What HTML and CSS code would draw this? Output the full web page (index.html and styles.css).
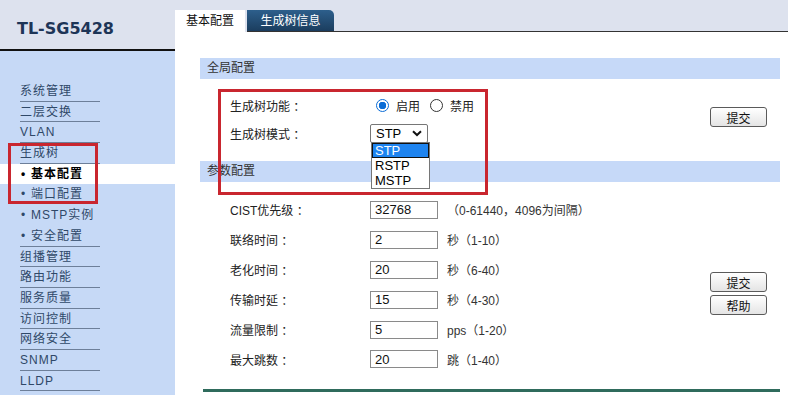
FILE: index.html
```html
<!DOCTYPE html>
<html lang="zh-CN">
<head>
  <meta charset="UTF-8">
  <title>TL-SG5428 生成树</title>
  <link rel="stylesheet" href="styles.css">
</head>
<body>
  <div class="page">

    <!-- 左侧菜单 -->
    <div class="sidebar">
      <div class="logo">TL-SG5428</div>
      <ul class="menu">
        <li><a>系统管理</a></li>
        <li><a>二层交换</a></li>
        <li><a>VLAN</a></li>
        <li><a>生成树</a></li>
        <li class="sub current"><a><span class="dot">•</span>基本配置</a></li>
        <li class="sub"><a><span class="dot">•</span>端口配置</a></li>
        <li class="sub"><a><span class="dot">•</span>MSTP实例</a></li>
        <li class="sub last"><a><span class="dot">•</span>安全配置</a></li>
        <li><a>组播管理</a></li>
        <li><a>路由功能</a></li>
        <li><a>服务质量</a></li>
        <li><a>访问控制</a></li>
        <li><a>网络安全</a></li>
        <li><a>SNMP</a></li>
        <li><a>LLDP</a></li>
      </ul>
      <div class="mark mark-menu"></div>
    </div>

    <!-- 右侧内容 -->
    <div class="main">
      <div class="tabbar">
        <div class="tab active">基本配置</div>
        <div class="tab dark">生成树信息</div>
        <div class="tab-fill"></div>
      </div>

      <div class="content">
        <div class="band">全局配置</div>
        <div class="section top">
          <div class="form">
            <div class="row">
              <span class="label">生成树功能 <span class="colon">：</span></span>
              <span class="radio on"></span><span class="radio-text">启用</span>
              <span class="radio"></span><span class="radio-text">禁用</span>
            </div>
            <div class="row">
              <span class="label">生成树模式 <span class="colon">：</span></span>
              <div class="select">
                <span>STP</span>
                <svg class="chev" width="10" height="7" viewBox="0 0 10 7"><path d="M1 1.2 L5 5 L9 1.2" fill="none" stroke="#111" stroke-width="2"/></svg>
                <ul class="dropdown">
                  <li class="picked">STP</li>
                  <li>RSTP</li>
                  <li>MSTP</li>
                </ul>
              </div>
            </div>
          </div>
          <div class="actions">
            <button type="button">提交</button>
          </div>
        </div>

        <div class="band">参数配置</div>
        <div class="section params">
          <div class="form">
            <div class="row"><span class="label">CIST优先级 <span class="colon">：</span></span><input class="box" type="text" value="32768"><span class="hint">（0-61440，4096为间隔）</span></div>
            <div class="row"><span class="label">联络时间 <span class="colon">：</span></span><input class="box" type="text" value="2"><span class="hint">秒（1-10）</span></div>
            <div class="row"><span class="label">老化时间 <span class="colon">：</span></span><input class="box" type="text" value="20"><span class="hint">秒（6-40）</span></div>
            <div class="row"><span class="label">传输时延 <span class="colon">：</span></span><input class="box" type="text" value="15"><span class="hint">秒（4-30）</span></div>
            <div class="row"><span class="label">流量限制 <span class="colon">：</span></span><input class="box" type="text" value="5"><span class="hint">pps（1-20）</span></div>
            <div class="row"><span class="label">最大跳数 <span class="colon">：</span></span><input class="box" type="text" value="20"><span class="hint">跳（1-40）</span></div>
          </div>
          <div class="actions low">
            <button type="button">提交</button>
            <button type="button">帮助</button>
          </div>
        </div>
        <div class="bottom-line"></div>
      </div>

      <div class="mark mark-form"></div>
    </div>

  </div>
</body>
</html>
```

FILE: styles.css
```css
body {
  margin: 0;
  font-family: "Liberation Sans", "Noto Sans CJK SC", sans-serif;
  font-size: 12px;
  color: #222;
  background: #fff;
}
.page {
  display: flex;
  width: 788px;
  height: 395px;
  overflow: hidden;
}

/* 左侧菜单 */
.sidebar {
  position: relative;
  width: 175px;
  flex: none;
  background: #c6d9f6;
}
.logo {
  height: 51px;
  box-sizing: border-box;
  padding: 19px 0 0 17px;
  background: #dde2ee;
  border-bottom: 2px solid #111;
  font-family: "DejaVu Sans", sans-serif;
  font-weight: bold;
  font-size: 16px;
  color: #1d3557;
}
.menu {
  list-style: none;
  margin: 0;
  padding: 30px 0 0 0;
}
.menu li {
  height: 20.7px;
}
.menu a {
  display: block;
  width: 80px;
  margin-left: 20px;
  height: 20.7px;
  box-sizing: border-box;
  line-height: 20px;
  border-bottom: 1px solid #6d7f99;
  letter-spacing: 1px;
  color: #2f4868;
}
.menu .sub a {
  border-bottom-color: transparent;
}
.menu .sub.last a {
  border-bottom-color: #6d7f99;
}
.menu .current {
  background: #fff;
}
.menu .current a {
  color: #000;
  font-weight: 600;
}
.dot {
  display: inline-block;
  width: 10px;
  margin-left: 1px;
  letter-spacing: 0;
}

/* 标注框 */
.mark {
  position: absolute;
  border: 3px solid #c9262f;
  box-sizing: border-box;
  pointer-events: none;
  z-index: 5;
}
.mark-menu {
  left: 8px;
  top: 143px;
  width: 90px;
  height: 61px;
}
.mark-form {
  left: 43px;
  top: 89px;
  width: 270px;
  height: 106px;
}

/* 右侧内容 */
.main {
  position: relative;
  flex: 1;
}
.tabbar {
  display: flex;
  align-items: flex-end;
  height: 32px;
  background: #dde2ee;
}
.tab {
  height: 22px;
  line-height: 22px;
  text-align: center;
  font-size: 12px;
}
.tab.active {
  width: 70px;
  background: #fff;
  color: #111;
}
.tab.dark {
  width: 87px;
  margin-left: 2px;
  background: linear-gradient(#2d5f8c, #1b3d5e);
  color: #fff;
  border-top-right-radius: 5px;
  box-sizing: border-box;
  border-bottom: 1px solid #333;
}
.tab-fill {
  flex: 1;
  border-bottom: 1px solid #333;
}

.content {
  padding: 26px 8px 0 25px;
}
.band {
  height: 21px;
  line-height: 21px;
  padding-left: 7px;
  background: #c6d9f8;
  color: #333;
}
.section {
  display: flex;
  justify-content: space-between;
}
.section.top {
  padding: 12px 0 14px 0;
}
.section.params {
  padding: 13px 0 15px 0;
}
.form {
  padding-left: 30px;
}
.row {
  display: flex;
  align-items: center;
  height: 28px;
}
.params .row {
  height: 29.9px;
}
.label {
  width: 140px;
  flex: none;
  color: #222;
}
.colon,
.hint {
  font-family: "Liberation Sans", "Noto Sans CJK TC", sans-serif;
}

.radio {
  width: 13px;
  height: 13px;
  margin-left: 6px;
  box-sizing: border-box;
  border: 1px solid #333;
  border-radius: 50%;
  background: #fff;
}
.radio.on {
  border: 1px solid #0a6cd6;
  background: radial-gradient(circle, #0a6cd6 0 3.5px, #fff 4px);
}
.radio-text {
  margin: 0 4px 0 7px;
}

.select {
  position: relative;
  display: flex;
  align-items: center;
  justify-content: space-between;
  width: 58px;
  height: 19px;
  box-sizing: border-box;
  padding: 0 5px 0 5px;
  border: 1px solid #767676;
  border-radius: 2px;
  font-size: 13px;
  color: #000;
  background: #fff;
}
.dropdown {
  position: absolute;
  left: 0;
  top: 17px;
  width: 57px;
  margin: 0;
  padding: 0;
  list-style: none;
  border: 1px solid #767676;
  background: #fff;
  z-index: 3;
}
.dropdown li {
  height: 15px;
  line-height: 15px;
  padding-left: 3px;
  font-size: 13px;
}
.dropdown .picked {
  background: #1e84f0;
  color: #fff;
  outline: 1px solid #111;
  outline-offset: -1px;
}

.box {
  width: 68px;
  height: 18px;
  box-sizing: border-box;
  margin: 0;
  padding: 0 4px;
  border: 1px solid #8a8a8a;
  font-family: "Liberation Sans", sans-serif;
  font-size: 13px;
  color: #111;
}
.hint {
  margin-left: 9px;
  color: #333;
}

.actions {
  display: flex;
  flex-direction: column;
  gap: 3px;
  padding: 16px 13px 0 0;
}
.actions.low {
  padding-top: 77px;
}
button {
  width: 57px;
  height: 20px;
  padding: 0;
  border: 1px solid #5a5a5a;
  border-radius: 3px;
  background: linear-gradient(#ffffff, #e4e4e4);
  font-family: "Noto Sans CJK SC", sans-serif;
  font-size: 12px;
  color: #111;
}
.bottom-line {
  margin-left: 3px;
  height: 3px;
  background: #2f6b5c;
}
```
